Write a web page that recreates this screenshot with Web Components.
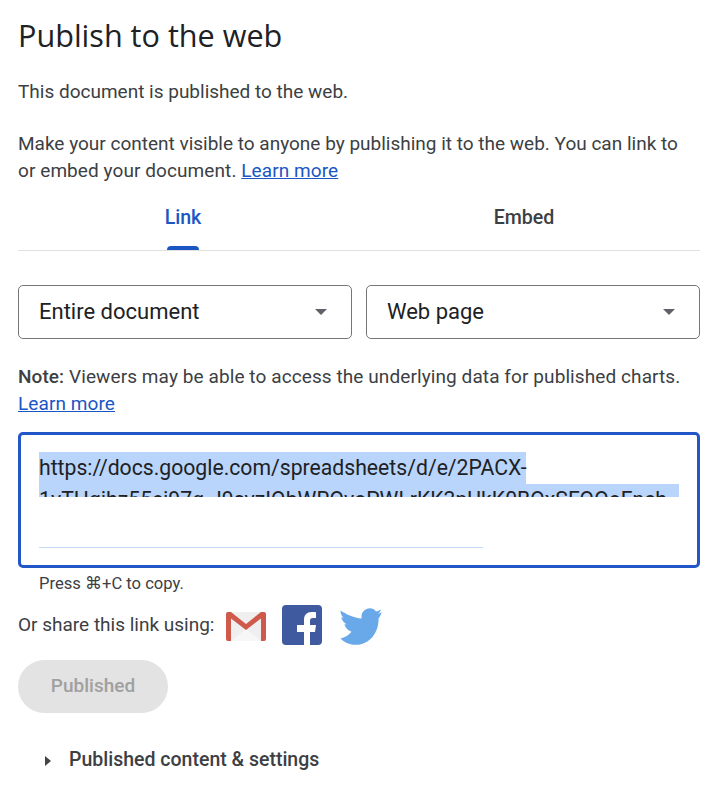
<!DOCTYPE html>
<html>
<head>
<meta charset="utf-8">
<title>Publish to the web</title>
<style>
html, body { margin: 0; padding: 0; background: #fff; }
body { font-family: Roboto, "Liberation Sans", sans-serif; color: #3c4043; }
</style>
</head>
<body>
<publish-dialog>
    <span slot="title">Publish to the web</span>
</publish-dialog>

<script>
class PublishDialog extends HTMLElement {
    constructor() {
        super();
        this.attachShadow({mode: "open"});
        this.shadowRoot.innerHTML = `
        <style>
        :host { display: block; width: 682px; padding: 0 22px 0 18px; font-size: 19px; line-height: 27px; color: #3c4043; }
        h1 { margin: 0; padding-top: 16px; padding-bottom: 1px; font-size: 30.6px; line-height: 38px; font-weight: 400; color: #202124; font-family: "Open Sans", Roboto, sans-serif; }
        .status { margin: 23px 0 0; }
        .intro { margin: 25px 0 0; }
        .intro span { letter-spacing: .08px; }
        .note { margin: 24px 0 0; letter-spacing: .09px; }
        .note b { font-weight: 500; }
        .copy { font-size: 16.6px; line-height: 20px; margin: 6px 0 0 21px; }
        .selects { display: flex; gap: 14px; margin-top: 34px; }
        a { color: #1a56c4; }
        </style>
        <h1><slot name="title"></slot></h1>
        <p class="status">This document is published to the web.</p>
        <p class="intro">Make your content visible to anyone by publishing it to the web. You can link to<br><span>or embed your document. <a href="#">Learn more</a></span></p>
        <tab-bar></tab-bar>
        <div class="selects">
            <drop-down>Entire document</drop-down>
            <drop-down>Web page</drop-down>
        </div>
        <p class="note"><b>Note:</b> Viewers may be able to access the underlying data for published charts.<br><a href="#">Learn more</a></p>
        <link-box></link-box>
        <div class="copy">Press ⌘+C to copy.</div>
        <share-row></share-row>
        <publish-button>Published</publish-button>
        <settings-toggle>Published content &amp; settings</settings-toggle>
        `;
    }
}

class TabBar extends HTMLElement {
    constructor() {
        super();
        this.attachShadow({mode: "open"});
        this.shadowRoot.innerHTML = `
        <style>
        :host { display: flex; margin-top: 12px; height: 54px; border-bottom: 1px solid #e0e0e0; font-size: 19.6px; font-weight: 500; }
        div { text-align: center; line-height: 28px; padding-top: 8px; position: relative; }
        .on { color: #1a56c4; width: 330px; }
        .on::after { content: ""; position: absolute; left: 149px; bottom: 0; width: 32px; height: 4px; background: #1a56c4; border-radius: 4px 4px 0 0; }
        .off { width: 352px; }
        </style>
        <div class="on">Link</div>
        <div class="off">Embed</div>
        `;
    }
}

class DropDown extends HTMLElement {
    constructor() {
        super();
        this.attachShadow({mode: "open"});
        this.shadowRoot.innerHTML = `
        <style>
        :host { flex: 1; display: flex; align-items: center; justify-content: space-between; height: 50px; padding: 0 24px 2px 20px; border: 1px solid #747775; border-radius: 5px; font-size: 22px; color: #202124; }
        i { width: 0; height: 0; border-left: 6.500px solid transparent; border-right: 6.500px solid transparent; border-top: 6.500px solid #5f6368; margin-top: 2px; }
        </style>
        <slot></slot><i></i>
        `;
    }
}

class LinkBox extends HTMLElement {
    constructor() {
        super();
        this.attachShadow({mode: "open"});
        this.shadowRoot.innerHTML = `
        <style>
        :host { display: block; margin-top: 15px; height: 130px; border: 3px solid #2356c7; border-radius: 5px; padding: 0 18px; font-size: 21.2px; color: #202124; }
        .text { margin-top: 17px; height: 45px; overflow: hidden; line-height: 32px; white-space: nowrap; }
        span { display: block; width: 487px; background: #b9d5fb; }
        span.wide { width: 642px; overflow: hidden; }
        .line { margin-top: 50px; width: 444px; height: 1px; background: #c4d9f5; }
        </style>
        <div class="text">
            <span>https://docs.google.com/spreadsheets/d/e/2PACX-</span>
            <span class="wide">1vTHqjhz55ej97q-J9svzIQbWRQvoPWLrKK3pUkK0BQxSFQQoFnch</span>
        </div>
        <div class="line"></div>
        `;
    }
}

class ShareRow extends HTMLElement {
    constructor() {
        super();
        this.attachShadow({mode: "open"});
        this.shadowRoot.innerHTML = `
        <style>
        :host { display: flex; align-items: center; height: 40px; margin-top: 11px; }
        .label { margin-right: 12px; padding-bottom: 2px; }
        svg { display: block; flex: none; }
        </style>
        <span class="label">Or share this link using:</span>
        <svg width="40" height="40" viewBox="0 0 40 40">
            <rect x="0" y="7" width="40" height="29" rx="2" fill="#efefef"/>
            <path d="M5 36 20 24 35 36z" fill="#f7f7f7"/>
            <path d="M0 9Q0 7 2 7H5L20 19 35 7H38Q40 7 40 9V34Q40 36 38 36H35V13.500L20 25 5 13.500V36H2Q0 36 0 34Z" fill="#cf5a4b"/>
        </svg>
        <svg width="40" height="40" viewBox="0 0 40 40" style="margin-left:16px">
            <rect width="40" height="40" rx="4" fill="#3f5a9e"/>
            <path d="M28 40V27h5l1-7h-6v-4c0-2 .6-3 3-3h3V7.300C33 7.100 31.500 7 29.500 7 25 7 22 9.700 22 15v5h-7v7h7v13z" fill="#fff"/>
        </svg>
        <svg width="43" height="37" viewBox="0 0 43 37" style="margin:2px 0 0 17px">
            <path d="M42.700 4.300C41.300 5 40 5.500 38.800 5.800 40.500 4.800 41.500 3.200 42 1.500 40.500 2.400 38.800 3 37 3.400 35.500 1.400 33.300.3 30.800.3 26.200.3 22.500 4 22.500 8.600 22.500 9.300 22.600 9.900 22.700 10.500 15 10 7.500 6.500 1.500 2.500 1.500 5.500 2.500 8 4.500 9.800 3.800 9.800 3 9.600 2.200 9.300 3 12.500 5 15 7.500 16.300 6.800 16.500 6 16.500 5.300 16.300 6.500 20 9 22.500 12.500 23.800 10 27 6 29.500 1.500 30.500 5.500 34.500 10.500 36.800 17 36.800 31 36.800 39.500 24 39.500 12V10.500C40.800 9 42 7 42.700 4.300Z" fill="#69a9ea"/>
        </svg>
        `;
    }
}

class PublishButton extends HTMLElement {
    constructor() {
        super();
        this.attachShadow({mode: "open"});
        this.shadowRoot.innerHTML = `
        <style>
        :host { display: flex; align-items: center; justify-content: center; width: 150px; height: 51px; padding-bottom: 2px; margin-top: 15px; border-radius: 27px; background: #e3e3e3; color: #a0a0a0; font-size: 19px; font-weight: 500; }
        </style>
        <slot></slot>
        `;
    }
}

class SettingsToggle extends HTMLElement {
    constructor() {
        super();
        this.attachShadow({mode: "open"});
        this.shadowRoot.innerHTML = `
        <style>
        :host { display: flex; align-items: center; margin-top: 33px; padding-left: 27px; font-size: 19.5px; font-weight: 500; }
        i { width: 0; height: 0; border-top: 5px solid transparent; border-bottom: 5px solid transparent; border-left: 6px solid #444; margin-right: 18px; margin-top: 3px; }
        </style>
        <i></i><slot></slot>
        `;
    }
}

customElements.define("publish-dialog", PublishDialog);
customElements.define("tab-bar", TabBar);
customElements.define("drop-down", DropDown);
customElements.define("link-box", LinkBox);
customElements.define("share-row", ShareRow);
customElements.define("publish-button", PublishButton);
customElements.define("settings-toggle", SettingsToggle);
</script>
</body>
</html>
